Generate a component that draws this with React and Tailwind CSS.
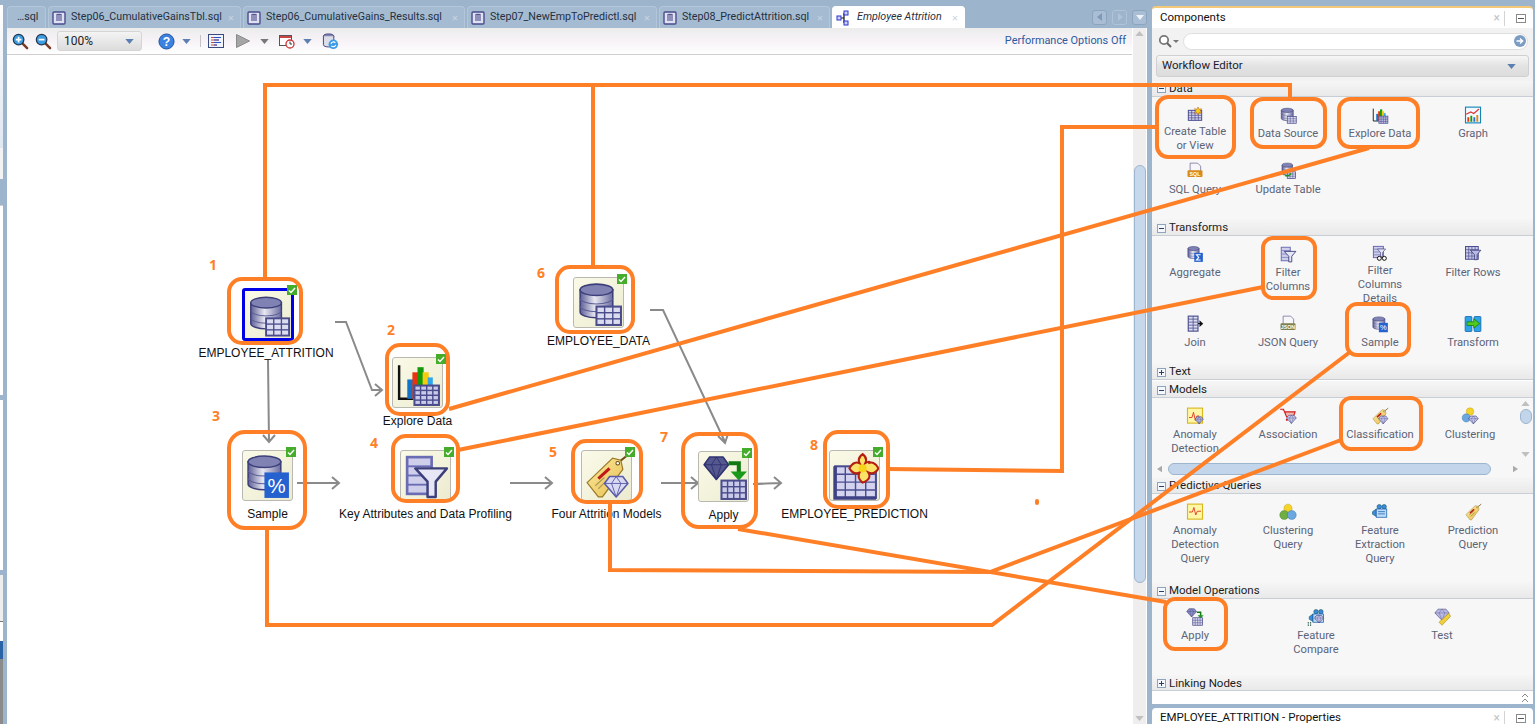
const NAVY = '#4a4c8c';

const Cyl = ({ x, y, w, h }) => {
  const ry = h * 0.17;
  const rx = w / 2;
  return (
    <g>
      <path d={`M${x} ${y + ry}v${h - 2 * ry}a${rx} ${ry} 0 0 0 ${w} 0v${-(h - 2 * ry)}z`} fill="url(#cyl)" stroke="#3d3f7a" strokeWidth="1.5" />
      <path d={`M${x} ${y + h * 0.42}a${rx} ${ry} 0 0 0 ${w} 0M${x} ${y + h * 0.65}a${rx} ${ry} 0 0 0 ${w} 0`} fill="none" stroke="#5a5c94" strokeWidth="1" />
      <ellipse cx={x + rx} cy={y + ry} rx={rx} ry={ry} fill="#7f82b3" stroke="#3d3f7a" strokeWidth="1.5" />
    </g>
  );
};

const Tbl = ({ x, y, w, h, c = 3, r = 3, fill = '#dcdcf0', line = NAVY, sw = 2 }) => {
  const cells = [];
  for (let i = 1; i < c; i++) cells.push(<path key={'c' + i} d={`M${x + (w / c) * i} ${y}v${h}`} stroke={line} strokeWidth={sw * 0.7} />);
  for (let i = 1; i < r; i++) cells.push(<path key={'r' + i} d={`M${x} ${y + (h / r) * i}h${w}`} stroke={line} strokeWidth={sw * 0.7} />);
  return (
    <g>
      <rect x={x} y={y} width={w} height={h} fill={fill} stroke={line} strokeWidth={sw} />
      {cells}
    </g>
  );
};

const Dia = ({ x, y, w, h, fill = '#b9b9e4', line = '#3d3f7a', sw = 1.5 }) => (
  <g>
    <polygon points={`${x + w * 0.22},${y} ${x + w * 0.78},${y} ${x + w},${y + h * 0.34} ${x + w / 2},${y + h} ${x},${y + h * 0.34}`} fill={fill} stroke={line} strokeWidth={sw} strokeLinejoin="round" />
    <path d={`M${x} ${y + h * 0.34}h${w}M${x + w * 0.3} ${y + h * 0.34}L${x + w / 2} ${y + h}L${x + w * 0.7} ${y + h * 0.34}L${x + w * 0.5} ${y}L${x + w * 0.3} ${y + h * 0.34}`} fill="none" stroke={line} strokeWidth={sw * 0.6} />
  </g>
);

const Bars = () => (
  <g>
    <rect x="14" y="21" width="6" height="19" fill="#1273c9" />
    <rect x="19" y="14" width="6" height="26" fill="#e8340f" />
    <rect x="24" y="9" width="6" height="31" fill="#129a0a" />
    <rect x="29" y="14" width="6" height="26" fill="#f5cc10" />
    <rect x="34" y="19" width="5" height="21" fill="#31a6ea" />
  </g>
);

const Funnel = ({ x = 14, y = 17, s = 1, fill = '#e6e6f5' }) => (
  <polygon transform={`translate(${x} ${y}) scale(${s})`} points="0,0 31,0 20,13 20,28 12,28 12,13" fill={fill} stroke="#3d3f7a" strokeWidth="2.4" strokeLinejoin="round" />
);

const Tag = ({ big }) => (
  <g>
    <path d="M36 11L46 3" stroke="#6b4a12" strokeWidth="2" />
    <polygon points="5,31 30,7 38,9 40,18 20,45 16,45" fill="url(#tag)" stroke="#9a7a25" strokeWidth="1.2" />
    <circle cx="35" cy="12" r="1.8" fill="#fff" stroke="#6b4a12" />
    <path d="M16 27L27 17" stroke="#c01818" strokeWidth={big ? 3 : 4} />
    {big && <path d="M13 34L22 26M16 37L24 29" stroke="#b39a50" strokeWidth="1.2" />}
  </g>
);

const Flower = () => (
  <g>
    <path d="M32 3c4 3 4 6 2.500 9 3-2 6-2 3 0 3-1.500 7-1 10 5-3 5-7 5.500-10 4 2 3 2 7-5.500 10-4-3-4.500-7-3-10-3 1.500-7 1-10-4 3-6 7-6.500 10-5-1.500-3-1.500-6 3-9z" fill="#fbe36a" stroke="#b32012" strokeWidth="2" />
    <circle cx="32" cy="17" r="4" fill="#f7d21a" />
  </g>
);

const GreenDown = () => (
  <g>
    <path d="M29 11h10v10" fill="none" stroke="#127a12" strokeWidth="4" />
    <polygon points="31,19 47,19 39,28" fill="#1a9a1a" />
  </g>
);

const Page = ({ badge, label }) => (
  <g>
    <path d="M11 3h20l8 8v18H11z" fill="#f7f7fb" stroke="#6a6c96" strokeWidth="2" />
    <rect x="4" y="22" width="40" height="18" rx="3" fill={badge} />
    <text x="24" y="36" textAnchor="middle" fontSize="14" fontWeight="700" fill="#fff" fontFamily="Liberation Sans, sans-serif">{label}</text>
  </g>
);

const Camera = () => (
  <g>
    <circle cx="22" cy="10" r="6" fill="#3a8be0" stroke="#155" strokeWidth="1.5" />
    <circle cx="35" cy="10" r="6" fill="#3a8be0" stroke="#155" strokeWidth="1.5" />
    <polygon points="4,23 14,16 14,36 4,30" fill="#3a8be0" stroke="#155" strokeWidth="1.5" />
    <rect x="14" y="16" width="28" height="22" fill="#bcdcf8" stroke="#1a5fb0" strokeWidth="2" />
    <path d="M19 23h18M19 29h18" stroke="#1a5fb0" strokeWidth="2" />
  </g>
);

const glyphs = {
  data: (
    <>
      <Cyl x={6} y={6} w={32} h={33} />
      <Tbl x={22} y={28} w={24} h={18} c={3} r={3} />
    </>
  ),
  explore: (
    <>
      <path d="M6 7v33h14" fill="none" stroke="#111" strokeWidth="2.4" />
      <Bars />
      <Tbl x={21} y={27} w={24} h={19} c={4} r={4} fill="#c9c9ea" />
    </>
  ),
  sample: (
    <>
      <Cyl x={5} y={5} w={32} h={33} />
      <rect x="21" y="21" width="24" height="25" fill="#2662cf" />
      <text x="33" y="41" textAnchor="middle" fontSize="20" fill="#fff" fontFamily="Liberation Sans, sans-serif">%</text>
    </>
  ),
  filter: (
    <>
      <Tbl x={6} y={6} w={24} h={36} c={1} r={4} fill="#cfcfec" line="#6a6cb4" sw={2.6} />
      <Funnel />
    </>
  ),
  models: (
    <>
      <Tag big />
      <Dia x={22} y={25} w={23} h={20} fill="#d9d9f2" line="#5a5ca8" />
    </>
  ),
  apply: (
    <>
      <Dia x={5} y={5} w={24} h={22} fill="#55578f" line="#2f3170" />
      <GreenDown />
      <Tbl x={22} y={28} w={24} h={18} c={4} r={3} fill="#c9c9ea" />
    </>
  ),
  predict: (
    <>
      <Tbl x={5} y={15} w={40} h={31} c={4} r={4} fill="#d3d3f0" line="#4a4c90" sw={2} />
      <path d="M5 15v31h40" fill="none" stroke="#3f4186" strokeWidth="3.5" />
      <Flower />
    </>
  ),
  create: (
    <>
      <Tbl x={4} y={13} w={40} h={30} c={4} r={4} fill="#d6d6f0" sw={3} />
      <polygon points="33,3 36,10 44,8 39,15 44,22 36,20 33,27 30,20 22,22 27,15 22,8 30,10" fill="#f6d01b" stroke="#b55512" strokeWidth="1.5" />
    </>
  ),
  graph: (
    <>
      <rect x="4" y="3" width="40" height="42" fill="#f3f8ff" stroke="#1186b5" strokeWidth="3" />
      <rect x="9" y="30" width="5" height="12" fill="#e8340f" />
      <rect x="17" y="26" width="5" height="16" fill="#129a0a" />
      <rect x="25" y="30" width="5" height="12" fill="#2a6fd8" />
      <rect x="33" y="24" width="5" height="18" fill="#e8840f" />
      <path d="M6 22l12-6 8 4 14-12" fill="none" stroke="#d33" strokeWidth="3" />
    </>
  ),
  sql: <Page badge="#d98a1c" label="SQL" />,
  json: <Page badge="#7e8050" label="JSON" />,
  update: (
    <>
      <Cyl x={8} y={3} w={28} h={32} />
      <Tbl x={22} y={26} w={22} h={18} />
      <path d="M12 34c2-10 10-14 18-10M32 30c-4 8-10 8-16 6" fill="none" stroke="#1a9a1a" strokeWidth="4" />
    </>
  ),
  aggregate: (
    <>
      <Cyl x={5} y={4} w={30} h={32} />
      <rect x="22" y="21" width="23" height="24" fill="#2662cf" />
      <path d="M39 26H28l6 7-6 7h11" fill="none" stroke="#fff" strokeWidth="3" />
    </>
  ),
  details: (
    <>
      <Tbl x={4} y={4} w={30} h={34} c={1} r={4} fill="#cfcfec" line="#5a5ca8" sw={2.6} />
      <Funnel x={16} y={12} s={0.8} />
      <circle cx="22" cy="40" r="6" fill="#fff" stroke="#111" strokeWidth="3" />
      <circle cx="37" cy="40" r="6" fill="#fff" stroke="#111" strokeWidth="3" />
    </>
  ),
  filterRows: (
    <>
      <Tbl x={4} y={4} w={34} h={34} c={4} r={4} fill="#c9c9ea" sw={2.6} />
      <Funnel x={17} y={14} s={0.9} fill="#b9b9e4" />
    </>
  ),
  join: (
    <>
      <Tbl x={6} y={3} w={26} h={40} c={2} r={5} sw={3} />
      <path d="M32 23h8" stroke="#111" strokeWidth="3" />
      <polygon points="36,14 46,23 36,32" fill="#111" />
    </>
  ),
  transform: (
    <>
      <rect x="3" y="4" width="18" height="40" rx="2" fill="#2ba3e6" stroke="#0f5fa8" strokeWidth="2" />
      <rect x="27" y="4" width="18" height="40" rx="2" fill="#2ba3e6" stroke="#0f5fa8" strokeWidth="2" />
      <polygon points="8,18 26,18 26,10 42,23 26,35 26,28 8,28" fill="#4fc81f" stroke="#167a12" strokeWidth="2" />
    </>
  ),
  anomaly: (
    <>
      <rect x="4" y="3" width="40" height="40" fill="#fff6a8" stroke="#d8b91c" strokeWidth="3" />
      <path d="M8 28h8l4-14 5 22 4-12h6" fill="none" stroke="#e2442a" strokeWidth="2.6" />
      <Dia x={24} y={26} w={22} h={19} />
    </>
  ),
  association: (
    <>
      <path d="M3 6h9l8 20h18l5-13H16" fill="#f5b8b0" stroke="#d11a1a" strokeWidth="3" />
      <circle cx="21" cy="34" r="3" fill="#d11a1a" />
      <Dia x={20} y={22} w={26} h={22} fill="#c6c6ea" />
    </>
  ),
  classification: (
    <>
      <Tag />
      <Dia x={20} y={24} w={25} h={21} fill="#c6c6ea" />
    </>
  ),
  clustering: (
    <>
      <circle cx="24" cy="12" r="10" fill="#f5d32b" stroke="#b09410" />
      <circle cx="14" cy="29" r="11" fill="#6ba8e0" stroke="#2a62a0" />
      <Dia x={20} y={24} w={26} h={21} fill="#c6c6ea" />
    </>
  ),
  anomalyQuery: (
    <>
      <rect x="4" y="3" width="40" height="40" fill="#fff6a8" stroke="#d8b91c" strokeWidth="3" />
      <path d="M8 24h9l4-12 5 20 4-10h10" fill="none" stroke="#e2442a" strokeWidth="2.6" />
    </>
  ),
  clusterQuery: (
    <>
      <circle cx="24" cy="14" r="11" fill="#f5d32b" stroke="#b09410" />
      <circle cx="14" cy="32" r="12" fill="#6fae45" stroke="#3f7a1c" />
      <circle cx="34" cy="32" r="12" fill="#6ba8e0" stroke="#2a62a0" />
    </>
  ),
  camera: <Camera />,
  tag: (
    <>
      <Tag />
      <path d="M14 32l12-11M18 36l11-11" stroke="#9a7a25" strokeWidth="2" />
    </>
  ),
  applySmall: (
    <>
      <Dia x={2} y={2} w={26} h={22} fill="#8c8ec6" />
      <GreenDown />
      <Tbl x={18} y={26} w={26} h={20} c={4} r={3} />
    </>
  ),
  compare: (
    <>
      <g transform="translate(2 0)">
        <Camera />
      </g>
      <Dia x={20} y={20} w={24} h={20} fill="#c6c6ea" />
      <path d="M2 38h3v3H2zM8 44h3v3H8zM2 44h3v3H2zM8 38h3v3H8z" fill="#143" />
    </>
  ),
  test: (
    <>
      <Dia x={5} y={3} w={38} h={30} fill="#b9b9e4" />
      <polygon points="16,38 42,14 47,22 24,46" fill="#f0cf3a" stroke="#a08812" strokeWidth="1.5" />
    </>
  ),
};

const Icon = ({ name, className = 'w-[18px] h-[18px]' }) => (
  <svg viewBox="0 0 48 48" className={className}>
    {glyphs[name]}
  </svg>
);

const nodes = [
  { icon: 'data', label: 'EMPLOYEE_ATTRITION', pos: 'left-[235px] top-[233px]', selected: true },
  { icon: 'explore', label: 'Explore Data', pos: 'left-[385px] top-[302px]' },
  { icon: 'sample', label: 'Sample', pos: 'left-[235px] top-[395px]' },
  { icon: 'filter', label: 'Key Attributes and Data Profiling', pos: 'left-[393px] top-[395px]' },
  { icon: 'models', label: 'Four Attrition Models', pos: 'left-[574px] top-[395px]' },
  { icon: 'data', label: 'EMPLOYEE_DATA', pos: 'left-[566px] top-[222px]' },
  { icon: 'apply', label: 'Apply', pos: 'left-[691px] top-[396px]' },
  { icon: 'predict', label: 'EMPLOYEE_PREDICTION', pos: 'left-[822px] top-[395px]' },
];

const annotationNumbers = [
  { n: 1, pos: 'left-[209px] top-[256px]' },
  { n: 2, pos: 'left-[387px] top-[321px]' },
  { n: 3, pos: 'left-[212px] top-[407px]' },
  { n: 4, pos: 'left-[370px] top-[434px]' },
  { n: 5, pos: 'left-[549px] top-[443px]' },
  { n: 6, pos: 'left-[537px] top-[264px]' },
  { n: 7, pos: 'left-[660px] top-[428px]' },
  { n: 8, pos: 'left-[810px] top-[436px]' },
];

const CheckBadge = ({ selected }) => (
  <svg viewBox="0 0 10 10" className={`absolute w-[10px] h-[10px] ${selected ? '-top-[6px] -right-[6px]' : '-top-[4px] -right-[4px]'}`}>
    <rect width="10" height="10" fill="#46ad2c" />
    <path d="M2 5.5l2 2 4-4.5" fill="none" stroke="#fff" strokeWidth="1.4" />
  </svg>
);

const Node = ({ icon, label, pos, selected }) => (
  <div
    className={`absolute rounded-[3px] bg-gradient-to-br from-[#fbfae8] to-[#ecebd0] ${pos} ${
      selected ? 'w-[52px] h-[53px] border-[3px] border-[#0000e6]' : 'w-[51px] h-[51px] border border-[#b9b9b2]'
    }`}
  >
    <Icon name={icon} className={selected ? 'w-[46px] h-[47px]' : 'w-[49px] h-[49px]'} />
    <CheckBadge selected={selected} />
    <div
      className={`absolute top-full left-1/2 -translate-x-1/2 whitespace-nowrap text-[12px] leading-[14px] text-[#111] font-['Liberation_Sans',sans-serif] ${
        selected ? 'mt-[8px] -ml-[2px]' : 'mt-[7px]'
      }`}
    >
      {label}
    </div>
  </div>
);

const Arrows = () => (
  <svg className="absolute inset-0 w-full h-full" fill="none" stroke="#8a8a8a" strokeWidth="2">
    <path d="M328 267h11l26 68h9M368 329l7 6-7 6" />
    <path d="M261 305l1 82M256 380l6 7 6-7" />
    <path d="M290 428h41M325 422l7 6-7 6" />
    <path d="M503 428h41M538 422l7 6-7 6" />
    <path d="M654 428h36M684 422l7 6-7 6" />
    <path d="M746 429c10 0 16-1 27-1M767 422l7 6-7 6" />
    <path d="M643 255h13l62 132M711 381l7 7 3-9" />
  </svg>
);

const Tab = ({ label, width, active, plain }) => (
  <div
    className={`${width} h-[22px] flex items-center rounded-t-[4px] border border-b-0 ${
      active ? 'bg-white border-white' : 'bg-[#a4bbd2] border-[#b3c6da]'
    }`}
  >
    {plain ? null : active ? (
      <svg viewBox="0 0 16 16" className="ml-[3px] w-[16px] h-[16px] shrink-0" fill="none">
        <path d="M5 8h3M8 3v10" stroke="#111" strokeWidth="1.2" />
        <rect x="1" y="6" width="4" height="4" fill="#cdd0f5" stroke="#2b34c8" />
        <rect x="8" y="1" width="4" height="4" fill="#cdd0f5" stroke="#2b34c8" />
        <rect x="8" y="11" width="4" height="4" fill="#cdd0f5" stroke="#2b34c8" />
      </svg>
    ) : (
      <svg viewBox="0 0 14 14" className="ml-[3px] w-[14px] h-[14px] shrink-0">
        <rect x="1" y="1" width="12" height="12" rx="1" fill="#dfe0f2" stroke="#4a4c8c" strokeWidth="1.4" />
        <ellipse cx="7" cy="4" rx="3" ry="1.3" fill="#55578f" />
        <rect x="4" y="4" width="6" height="6" fill="#8e90bb" />
      </svg>
    )}
    <span
      className={`${plain ? 'ml-[9px]' : 'ml-[5px]'} whitespace-nowrap text-[10.7px] text-[#26303f] font-['Roboto',sans-serif] ${
        active ? 'italic' : ''
      }`}
    >
      {label}
    </span>
    {!plain && <span className="ml-auto mr-[6px] text-[11px] leading-none text-[#c7d5e3]">×</span>}
  </div>
);

const NavButton = ({ d, dim, fill = '#7f9ab6' }) => (
  <div className={`w-[15px] h-[15px] rounded-[3px] flex items-center justify-center border ${dim ? 'border-[#b1c4d7]' : 'border-[#8ba5bf] bg-[#a9bed4]'}`}>
    <svg viewBox="0 0 10 10" className="w-[10px] h-[10px]">
      <path d={d} fill={fill} />
    </svg>
  </div>
);

const Caret = ({ color = '#5a7fb0', className = '' }) => (
  <svg viewBox="0 0 10 6" className={`w-[9px] h-[5px] shrink-0 ${className}`}>
    <path d="M0 0h10L5 6z" fill={color} />
  </svg>
);

const Magnifier = ({ plus }) => (
  <svg viewBox="0 0 18 18" className="w-[17px] h-[17px]">
    <path d="M11 11l5 5" stroke="#7a3a22" strokeWidth="2.6" strokeLinecap="round" />
    <circle cx="7" cy="7" r="5.6" fill="#3f9be0" stroke="#22384f" strokeWidth="1.3" />
    <path d={plus ? 'M4 7h6M7 4v6' : 'M4 7h6'} stroke="#fff" strokeWidth="1.8" />
  </svg>
);

const Toolbar = () => (
  <div className="relative h-[27px] flex items-center border-b border-[#cfcfcf] bg-gradient-to-b from-[#ececec] via-[#f7f3f7] to-white">
    <div className="ml-[5px]"><Magnifier plus /></div>
    <div className="ml-[6px]"><Magnifier /></div>
    <div className="ml-[5px] w-[85px] h-[20px] flex items-center justify-between pl-[6px] pr-[7px] rounded-[3px] border border-[#d5d5d5] bg-gradient-to-b from-[#f4f4f4] to-[#dcdcdc] text-[12px] text-[#222] font-['Roboto',sans-serif]">
      100%
      <Caret />
    </div>
    <svg viewBox="0 0 18 18" className="ml-[16px] w-[17px] h-[17px]">
      <circle cx="9" cy="9" r="8" fill="#3b82e0" stroke="#1b4f9c" />
      <text x="9" y="13.5" textAnchor="middle" fontSize="13" fontWeight="700" fill="#fff" fontFamily="Liberation Sans, sans-serif">?</text>
    </svg>
    <Caret className="ml-[7px]" />
    <div className="ml-[9px] w-px h-[12px] bg-[#c4c4c4]" />
    <svg viewBox="0 0 16 14" className="ml-[7px] w-[16px] h-[14px]">
      <rect x="0.5" y="0.5" width="15" height="13" fill="#eef3fc" stroke="#3a4a80" />
      <path d="M3 3.5h10M3 6h8M3 8.5h10M3 11h6" stroke="#d04a2a" strokeWidth="1" />
      <path d="M6 3.5h7M6 6h5M6 8.5h7M6 11h3" stroke="#2a50c8" strokeWidth="1" />
    </svg>
    <svg viewBox="0 0 14 14" className="ml-[12px] w-[14px] h-[14px]">
      <path d="M0.5 0.5L13.5 7L0.5 13.5z" fill="#a5a5a5" stroke="#8a8a8a" />
    </svg>
    <Caret color="#777" className="ml-[10px]" />
    <svg viewBox="0 0 16 16" className="ml-[10px] w-[16px] h-[16px]">
      <rect x="0.5" y="2.5" width="12" height="10" fill="#fff" stroke="#555" />
      <path d="M1 3h11v2H1z" fill="#c44" />
      <circle cx="11" cy="11" r="4" fill="#fff" stroke="#c33" strokeWidth="1.3" />
      <path d="M11 8.5V11h2" stroke="#333" fill="none" />
    </svg>
    <Caret className="ml-[8px]" />
    <svg viewBox="0 0 18 18" className="ml-[10px] w-[17px] h-[17px]">
      <ellipse cx="7" cy="3.5" rx="5.5" ry="2.5" fill="#8385b0" stroke="#3d3f7a" />
      <path d="M1.5 3.5v9c0 3 11 3 11 0v-9" fill="#dcdcea" stroke="#3d3f7a" />
      <circle cx="12" cy="12" r="5" fill="#3b9be8" />
      <path d="M9.5 11.5a2.6 2.6 0 0 1 4.6-1M14.5 12.5a2.6 2.6 0 0 1-4.6 1" fill="none" stroke="#fff" strokeWidth="1.2" />
    </svg>
    <span className="ml-auto mr-[6px] text-[10.9px] text-[#2c5aa0] font-['Roboto',sans-serif]">Performance Options Off</span>
  </div>
);

const VScroll = ({ className, thumbClass }) => (
  <div className={`flex flex-col items-center ${className}`}>
    <Caret color="#c0c0c0" className="mt-[3px] rotate-180" />
    <div className={thumbClass} />
    <Caret color="#c0c0c0" className="mt-auto mb-[3px]" />
  </div>
);

const PanelHeader = ({ title }) => (
  <div className="h-[20px] flex items-center pl-[8px] text-[11.5px] text-[#111] font-['Roboto',sans-serif]">
    <span className="whitespace-nowrap">{title}</span>
    <span className="ml-auto text-[12px] leading-none text-[#c4c4c4]">×</span>
    <div className="ml-[4px] w-px h-[15px] bg-[#d4d4d4]" />
    <div className="ml-[11px] mr-[7px] w-[10px] h-[9px] border border-[#8a8a8a] flex items-center justify-center">
      <div className="w-[6px] h-px bg-[#555]" />
    </div>
  </div>
);

const Toggle = ({ open }) => (
  <svg viewBox="0 0 9 9" className="w-[9px] h-[9px] shrink-0">
    <rect x="0.5" y="0.5" width="8" height="8" fill="#f4f7fb" stroke="#8ea4bc" />
    <path d={open ? 'M2 4.5h5' : 'M2 4.5h5M4.5 2v5'} stroke="#2a3f66" />
  </svg>
);

const SectionHeader = ({ title, open = true, h = 'h-[17px]', top = 'pt-[2px]' }) => (
  <div className={`${h} ${top} flex items-center gap-[3px] pl-[5px] bg-gradient-to-b from-[#f6f6f6] to-[#e9e9e9] border-b border-[#c8ced6] text-[11.5px] text-[#1c1c1c] font-['Roboto',sans-serif]`}>
    <Toggle open={open} />
    {title}
  </div>
);

const Item = ({ icon, lines }) => (
  <div className="flex flex-col items-center pt-[9px] text-[11.2px] leading-[14px] text-[#5d6478] font-['Roboto',sans-serif] text-center">
    <Icon name={icon} />
    <div className="mt-[3px] whitespace-nowrap">
      {lines.map((l) => (
        <div key={l}>{l}</div>
      ))}
    </div>
  </div>
);

const ItemGrid = ({ items, className }) => (
  <div className={`grid ${className}`}>
    {items.map(([icon, ...lines]) => (
      <Item key={lines.join()} icon={icon} lines={lines} />
    ))}
  </div>
);

const Components = () => (
  <div className="h-[698px] flex flex-col rounded-t-[4px] border-t-2 border-[#f3c878] bg-white">
    <PanelHeader title="Components" />
    <div className="bg-[#f2f2f2] flex-1 flex flex-col">
      <div className="h-[24px] flex items-center pl-[4px] pr-[5px] pt-[2px]">
        <svg viewBox="0 0 22 14" className="w-[22px] h-[14px] shrink-0 ml-[2px]">
          <circle cx="6" cy="6" r="4.2" fill="#fff" stroke="#777" strokeWidth="1.8" />
          <path d="M9 9l4 4" stroke="#666" strokeWidth="2" />
          <path d="M15 6h6l-3 3z" fill="#777" />
        </svg>
        <div className="ml-[3px] flex-1 h-[17px] rounded-full border border-[#dedede] bg-white flex items-center justify-end pr-[1px]">
          <svg viewBox="0 0 12 12" className="w-[12px] h-[12px]">
            <circle cx="6" cy="6" r="6" fill="#7d9cc4" />
            <path d="M2.5 6h6M6 3.5L8.7 6 6 8.5" fill="none" stroke="#fff" strokeWidth="1.3" />
          </svg>
        </div>
      </div>
      <div className="mx-[4px] mt-[3px] h-[22px] flex items-center justify-between px-[5px] rounded-[3px] border border-[#d0d0d0] bg-gradient-to-b from-[#f6f6f6] via-[#e3e3e3] to-[#dcdcdc] text-[11.5px] text-[#1b1b30] font-['Roboto',sans-serif]">
        Workflow Editor
        <Caret className="mr-[7px]" />
      </div>
      <div className="mt-[4px]">
        <SectionHeader title="Data" h="h-[16px]" top="pt-0" />
        <ItemGrid
          className="h-[122px] bg-[#f7f7f7] grid-cols-[86px_100px_84px_102px] auto-rows-[56px]"
          items={[
            ['create', 'Create Table', 'or View'],
            ['data', 'Data Source'],
            ['explore', 'Explore Data'],
            ['graph', 'Graph'],
            ['sql', 'SQL Query'],
            ['update', 'Update Table'],
          ]}
        />
        <SectionHeader title="Transforms" />
        <ItemGrid
          className="h-[127px] bg-[#f7f7f7] grid-cols-[86px_100px_84px_102px] auto-rows-[70px]"
          items={[
            ['aggregate', 'Aggregate'],
            ['filter', 'Filter', 'Columns'],
            ['details', 'Filter', 'Columns', 'Details'],
            ['filterRows', 'Filter Rows'],
            ['join', 'Join'],
            ['json', 'JSON Query'],
            ['sample', 'Sample'],
            ['transform', 'Transform'],
          ]}
        />
        <SectionHeader title="Text" open={false} />
        <div className="h-px bg-white" />
        <SectionHeader title="Models" />
        <div className="h-[79px] bg-[#f7f7f7] flex flex-col">
          <div className="h-[62px] flex overflow-hidden">
            <ItemGrid
              className="w-[366px] grid-cols-[86px_100px_84px_96px] auto-rows-[63px]"
              items={[
                ['anomaly', 'Anomaly', 'Detection'],
                ['association', 'Association'],
                ['classification', 'Classification'],
                ['clustering', 'Clustering'],
              ]}
            />
            <VScroll className="flex-1" thumbClass="mt-[3px] w-[12px] h-[15px] rounded-full bg-[#c3d5ea] border border-[#9db5cd]" />
          </div>
          <div className="h-[17px] flex items-center px-[5px] gap-[6px]">
            <svg viewBox="0 0 6 8" className="w-[5px] h-[8px] shrink-0"><path d="M6 0v8L0 4z" fill="#aaa" /></svg>
            <div className="w-[323px] h-[12px] rounded-full bg-[#c3d5ea] border border-[#9db5cd]" />
            <svg viewBox="0 0 6 8" className="ml-[16px] w-[5px] h-[8px] shrink-0"><path d="M0 0v8l6-4z" fill="#aaa" /></svg>
          </div>
        </div>
        <SectionHeader title="Predictive Queries" />
        <ItemGrid
          className="h-[88px] bg-[#f7f7f7] grid-cols-[86px_100px_84px_102px]"
          items={[
            ['anomalyQuery', 'Anomaly', 'Detection', 'Query'],
            ['clusterQuery', 'Clustering', 'Query'],
            ['camera', 'Feature', 'Extraction', 'Query'],
            ['tag', 'Prediction', 'Query'],
          ]}
        />
        <SectionHeader title="Model Operations" />
        <ItemGrid
          className="h-[76px] bg-[#f7f7f7] grid-cols-[86px_156px_96px]"
          items={[
            ['applySmall', 'Apply'],
            ['compare', 'Feature', 'Compare'],
            ['test', 'Test'],
          ]}
        />
        <SectionHeader title="Linking Nodes" open={false} h="h-[16px]" />
      </div>
      <div className="flex-1 bg-white flex items-center justify-end pr-[4px]">
        <svg viewBox="0 0 8 10" className="w-[8px] h-[10px]" fill="none" stroke="#888">
          <path d="M1 4l3-3 3 3M1 9l3-3 3 3" />
        </svg>
      </div>
    </div>
  </div>
);

const Overlay = () => (
  <>
    <svg className="absolute inset-0 w-full h-full pointer-events-none" fill="none" stroke="#ff7f27" strokeWidth="4">
      <rect x="229" y="279" width="72" height="64" rx="13" />
      <rect x="387" y="345" width="61" height="69" rx="13" />
      <rect x="229" y="432" width="76" height="96" rx="16" />
      <rect x="393" y="436" width="65" height="65" rx="13" />
      <rect x="573" y="441" width="68" height="61" rx="13" />
      <rect x="557" y="267" width="76" height="65" rx="13" />
      <rect x="683" y="434" width="73" height="93" rx="16" />
      <rect x="825" y="432" width="63" height="75" rx="13" />
      <rect x="1157" y="97" width="77" height="60" rx="11" />
      <rect x="1252" y="99" width="73" height="48" rx="11" />
      <rect x="1339" y="99" width="79" height="48" rx="11" />
      <rect x="1263" y="238" width="52" height="60" rx="10" />
      <rect x="1347" y="304" width="62" height="51" rx="10" />
      <rect x="1341" y="398" width="80" height="51" rx="10" />
      <rect x="1165" y="599" width="61" height="50" rx="10" />
      <path d="M265 279V85H1290V99" />
      <path d="M593 267V85" />
      <path d="M1369 148L449 409" />
      <path d="M1263 287L458 450" />
      <path d="M888 469L1062 471V127H1157" />
      <path d="M267 528V625H992L1350 352" />
      <path d="M610 502V570L990 572L1341 440" />
      <path d="M738 529L1166 602" />
      <path d="M1037 501v2" strokeLinecap="round" />
    </svg>
    {annotationNumbers.map((a) => (
      <div key={a.n} className={`absolute ${a.pos} text-[14px] leading-[18px] font-bold text-[#ff7f27] font-['Noto_Sans',sans-serif]`}>
        {a.n}
      </div>
    ))}
  </>
);

export default function App() {
  return (
    <div className="relative w-full h-[724px] overflow-hidden bg-[#9cb4cc] flex">
      <svg className="absolute w-0 h-0">
        <defs>
          <linearGradient id="cyl" x1="0" x2="1" y1="0" y2="0">
            <stop offset="0" stopColor="#5c5e96" />
            <stop offset="0.45" stopColor="#e8e8f2" />
            <stop offset="1" stopColor="#6a6ca0" />
          </linearGradient>
          <linearGradient id="tag" x1="0" x2="1" y1="0" y2="1">
            <stop offset="0" stopColor="#fbe9a0" />
            <stop offset="1" stopColor="#e8c050" />
          </linearGradient>
        </defs>
      </svg>

      {/* left edge, remains of the docked panels */}
      <div className="w-[3px] flex flex-col shrink-0 mr-[4px] bg-white">
        <div className="h-[5px] bg-[#9cb4cc]" />
        <div className="h-[143px] bg-gradient-to-b from-white to-[#dfe7f1]" />
        <div className="h-[31px] bg-[#f3f3f3]" />
        <div className="h-[26px] bg-[#9cb4cc]" />
        <div className="h-[190px] bg-white border-t border-[#cfcfcf]" />
        <div className="h-[5px] bg-[#9cb4cc]" />
        <div className="h-[170px] bg-white" />
        <div className="h-[5px] bg-[#9cb4cc]" />
        <div className="h-[46px] bg-[#eeeeee]" />
        <div className="h-[20px] bg-white border-t border-[#777]" />
        <div className="h-[18px] bg-[#2a62a8]" />
        <div className="flex-1 bg-[#8b8b8b]" />
      </div>

      <div className="w-[1140px] shrink-0 flex flex-col">
        <div className="h-[28px] flex items-end gap-[2px]">
          <Tab label="…sql" width="w-[39px]" plain />
          <Tab label="Step06_CumulativeGainsTbl.sql" width="w-[193px]" />
          <Tab label="Step06_CumulativeGains_Results.sql" width="w-[222px]" />
          <Tab label="Step07_NewEmpToPredictl.sql" width="w-[190px]" />
          <Tab label="Step08_PredictAttrition.sql" width="w-[171px]" />
          <Tab label="Employee Attrition" width="w-[133px]" active />
          <div className="ml-auto flex items-center gap-[5px] self-center mt-[6px] pr-[0px]">
            <NavButton d="M7 1v8L2 5z" />
            <NavButton d="M3 1v8l5-4z" dim fill="#b1c4d7" />
            <NavButton d="M1 3h8L5 8z" fill="#eef3f8" />
          </div>
        </div>
        <div className="flex-1 flex">
          <div className="flex-1 flex flex-col bg-white">
            <Toolbar />
            <div className="relative flex-1">
              <Arrows />
              {nodes.map((n) => (
                <Node key={n.label} {...n} />
              ))}
            </div>
          </div>
          <VScroll
            className="w-[15px] bg-[#efeded] border-x border-white"
            thumbClass="mt-[129px] w-[12px] h-[418px] rounded-full bg-[#c8d8ec] border border-[#9db5cd]"
          />
        </div>
      </div>

      <div className="w-[381px] ml-[5px] pt-[6px] flex flex-col gap-[4px]">
        <Components />
        <div className="flex-1 rounded-t-[4px] bg-white overflow-hidden">
          <PanelHeader title="EMPLOYEE_ATTRITION - Properties" />
        </div>
      </div>

      <Overlay />
    </div>
  );
}
